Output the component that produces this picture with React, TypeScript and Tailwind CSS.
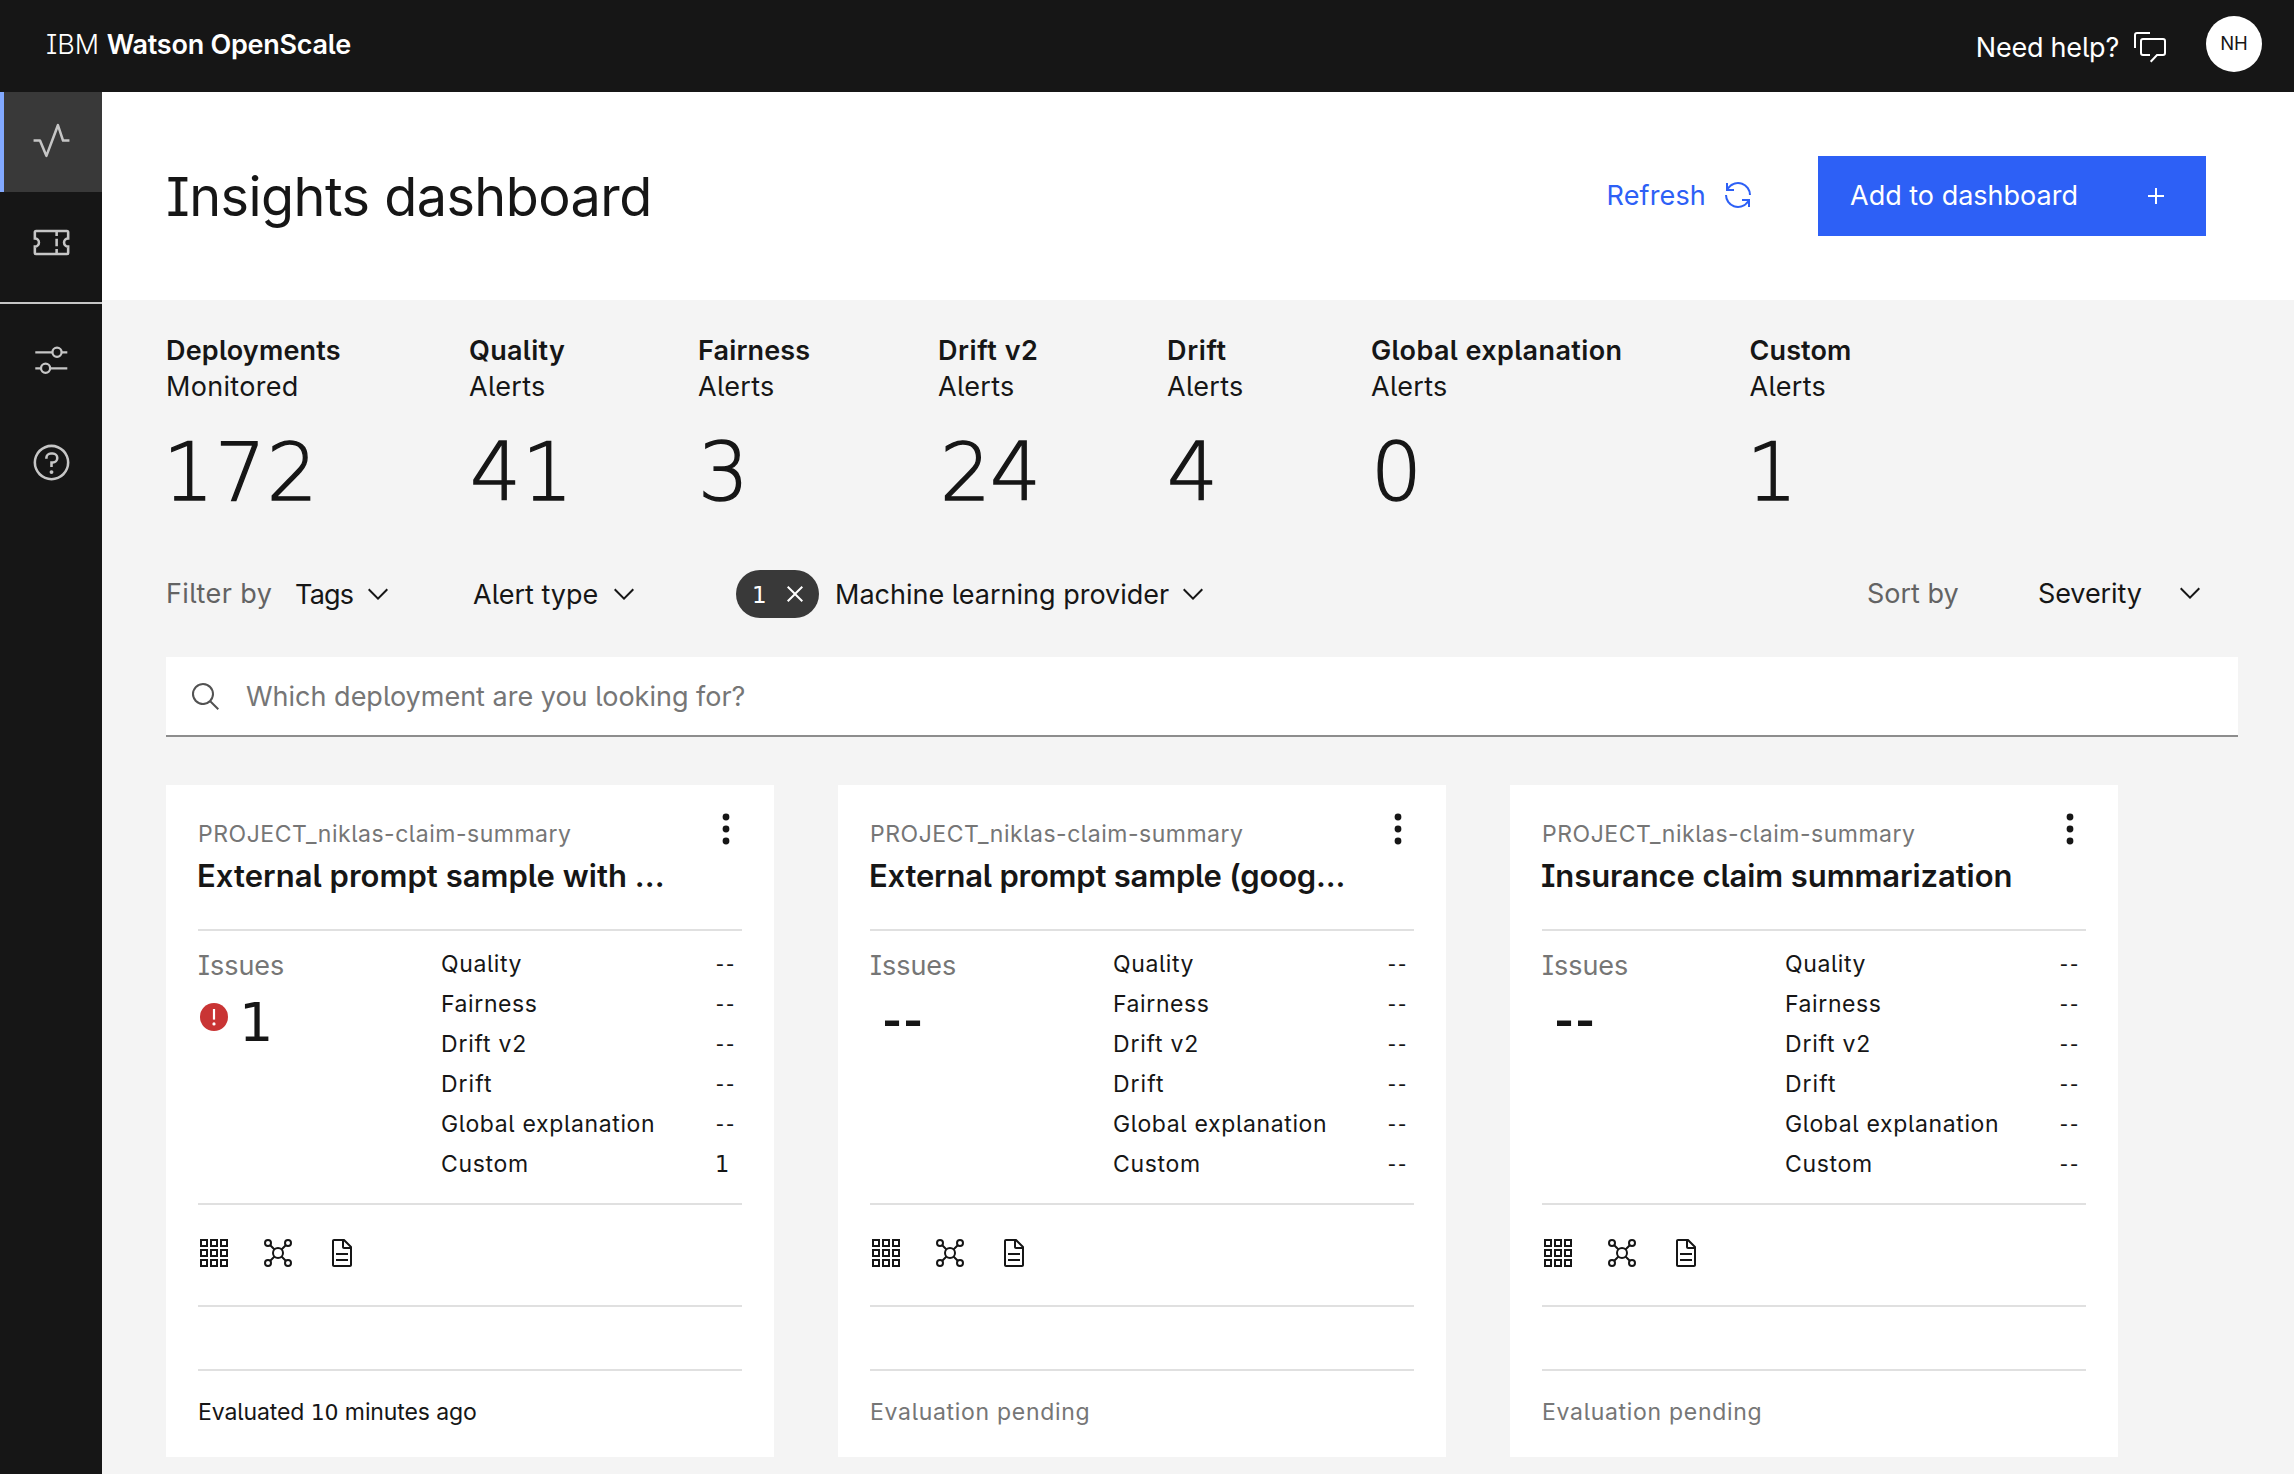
import React from "react";

type IconProps = { className?: string };
const box = "0 0 32 32";

const ChevronDown = ({ className = "" }: IconProps) => (
  <svg viewBox={box} fill="currentColor" className={`size-8 shrink-0 ${className}`}><path d="M16 22 6 12l1.4-1.4 8.6 8.6 8.6-8.6L26 12z" /></svg>
);
const Activity = () => (
  <svg viewBox={box} fill="currentColor" className="size-[41px]"><path d="M12,29a1,1,0,0,1-.92-.62L6.33,17H2V15H7a1,1,0,0,1,.92.62L12,25.28,20.06,3.65A1,1,0,0,1,21,3a1,1,0,0,1,.93.68L25.72,15H30v2H25a1,1,0,0,1-.95-.68L21,7,12.94,28.35A1,1,0,0,1,12,29Z" /></svg>
);
const Ticket = () => (
  <svg viewBox={box} fill="none" stroke="currentColor" strokeWidth="2" className="size-[41px]">
    <path d="M4 7h24a1 1 0 0 1 1 1v4.8a3.2 3.2 0 0 0 0 6.4V24a1 1 0 0 1-1 1H4a1 1 0 0 1-1-1v-4.8a3.2 3.2 0 0 0 0-6.4V8a1 1 0 0 1 1-1Z" />
    <path d="M20 7v4M20 13v6M20 21v4" />
  </svg>
);
const Sliders = () => (
  <svg viewBox={box} fill="none" stroke="currentColor" strokeWidth="2" className="size-[36.6px]">
    <path d="M2 9h15M25 9h5M2 23h5M15 23h15" />
    <circle cx="21" cy="9" r="4" /><circle cx="11" cy="23" r="4" />
  </svg>
);
const Help = () => (
  <svg viewBox={box} fill="currentColor" className="size-[41px]">
    <path d="M16,2A14,14,0,1,0,30,16,14,14,0,0,0,16,2Zm0,26A12,12,0,1,1,28,16,12,12,0,0,1,16,28Z" />
    <circle cx="16" cy="23.5" r="1.5" />
    <path d="M17,8H15.5A4.49,4.49,0,0,0,11,12.49V13h2v-.5A2.5,2.5,0,0,1,15.5,10H17a2.5,2.5,0,0,1,0,5H15v4.5h2V17a4.5,4.5,0,0,0,0-9Z" />
  </svg>
);
const Chat = () => (
  <svg viewBox={box} fill="none" stroke="currentColor" strokeWidth="2" className="size-8">
    <path d="M1 17V4a2 2 0 0 1 2-2h13" />
    <path d="M16 24H9a2 2 0 0 1-2-2V10a2 2 0 0 1 2-2h20a2 2 0 0 1 2 2v12a2 2 0 0 1-2 2h-6l-6.3 6.8" />
  </svg>
);
const Renew = () => (
  <svg viewBox={box} fill="currentColor" className="mb-[3px] size-8"><path d="M12,10H6.78A11,11,0,0,1,27,16h2A13,13,0,0,0,6,7.68V4H4v8h8Z" /><path d="M20,22h5.22A11,11,0,0,1,5,16H3a13,13,0,0,0,23,8.32V28h2V20H20Z" /></svg>
);
const Plus = () => (
  <svg viewBox={box} fill="currentColor" className="size-8"><path d="M17 15V8h-2v7H8v2h7v7h2v-7h7v-2z" /></svg>
);
const Close = () => (
  <svg viewBox={box} fill="currentColor" className="size-8"><path d="M17.4 16 24 9.4 22.6 8 16 14.6 9.4 8 8 9.4l6.6 6.6L8 22.6 9.4 24l6.6-6.6 6.6 6.6 1.4-1.4z" /></svg>
);
const Search = () => (
  <svg viewBox={box} fill="currentColor" className="mt-0.5 size-8"><path d="M29,27.5859l-7.5521-7.5521a11.0177,11.0177,0,1,0-1.4141,1.4141L27.5859,29ZM4,13a9,9,0,1,1,9,9A9.01,9.01,0,0,1,4,13Z" /></svg>
);
const Kebab = () => (
  <svg viewBox={box} fill="currentColor" className="size-8"><circle cx="16" cy="4" r="3.4" /><circle cx="16" cy="16" r="3.4" /><circle cx="16" cy="28" r="3.4" /></svg>
);
const ErrorFilled = () => (
  <svg viewBox={box} className="mt-2 size-8 shrink-0"><circle cx="16" cy="16" r="14" fill="#c93434" /><path d="M14.9 8h2.2v10.6h-2.2z" fill="#fff" /><circle cx="16" cy="22.9" r="1.6" fill="#fff" /></svg>
);
const GridIcon = () => (
  <svg viewBox={box} fill="none" stroke="currentColor" strokeWidth="2" className="size-8">
    {[3, 13, 23].map((y) => [3, 13, 23].map((x) => <rect key={`${x}-${y}`} x={x} y={y} width="6" height="6" />))}
  </svg>
);
const Network = () => (
  <svg viewBox={box} fill="none" stroke="currentColor" strokeWidth="2" className="size-8">
    <circle cx="16" cy="16" r="5" />
    {[6, 26].map((y) => [6, 26].map((x) => <circle key={`${x}-${y}`} cx={x} cy={y} r="3" />))}
    <path d="m8 8 4.5 4.5M24 8l-4.5 4.5M8 24l4.5-4.5M24 24l-4.5-4.5" />
  </svg>
);
const Document = () => (
  <svg viewBox={box} fill="currentColor" className="size-8"><path d="M25.7,9.3l-7-7C18.5,2.1,18.3,2,18,2H8C6.9,2,6,2.9,6,4v24c0,1.1,.9,2,2,2h16c1.1,0,2-.9,2-2V10C26,9.7,25.9,9.5,25.7,9.3z M18,4.4l5.6,5.6H18V4.4z M24,28H8V4h8v6c0,1.1,.9,2,2,2h6V28z" /><path d="M10 22h12v2H10zM10 16h12v2H10z" /></svg>
);

const stats = [
  { name: "Deployments", sub: "Monitored", value: "172", width: "w-[303px]", label: "tracking-[0.2px]", number: "-ml-[3px] tracking-[1px]" },
  { name: "Quality", sub: "Alerts", value: "41", width: "w-[229px]", label: "tracking-[0.32px]", number: "ml-px tracking-[1px]" },
  { name: "Fairness", sub: "Alerts", value: "3", width: "w-[240px]", label: "tracking-[0.15px]", number: "" },
  { name: "Drift v2", sub: "Alerts", value: "24", width: "w-[229px]", label: "tracking-[0.55px]", number: "ml-0.5 tracking-[-1px]" },
  { name: "Drift", sub: "Alerts", value: "4", width: "w-[204px]", label: "tracking-[0.64px]", number: "" },
  { name: "Global explanation", sub: "Alerts", value: "0", width: "w-[378.5px]", label: "tracking-[0.39px]", number: "" },
  { name: "Custom", sub: "Alerts", value: "1", width: "w-[200px]", label: "tracking-[0.1px]", number: "-ml-[3px]" },
];

const metrics = [
  { name: "Quality", tracking: "tracking-[0.6px]" },
  { name: "Fairness", tracking: "tracking-[0.59px]" },
  { name: "Drift v2", tracking: "tracking-[0.78px]" },
  { name: "Drift", tracking: "tracking-[1px]" },
  { name: "Global explanation", tracking: "tracking-[0.64px]" },
  { name: "Custom", tracking: "tracking-[0.67px]" },
];

const cards = [
  { title: "External prompt sample with ...", tracking: "tracking-[0.03px]", issues: 1, evaluated: true },
  { title: "External prompt sample (goog...", tracking: "tracking-[-0.21px]", issues: 0, evaluated: false },
  { title: "Insurance claim summarization", tracking: "tracking-[-0.09px]", issues: 0, evaluated: false },
];

function Card({ title, tracking, issues, evaluated }: (typeof cards)[number]) {
  return (
    <article className="h-[672px] w-[608px] bg-white px-8 pt-8">
      <header className="flex h-28 justify-between">
        <div className="pt-px whitespace-nowrap">
          <p className="text-[23px] leading-8 tracking-[0.52px] text-[#767676]">PROJECT_niklas-claim-summary</p>
          <h2 className={`mt-1.5 -ml-px text-[31px] leading-10 font-semibold ${tracking}`}>{title}</h2>
        </div>
        <div className="-mt-1"><Kebab /></div>
      </header>
      <section className="flex h-[276px] border-y-2 border-[#e0e0e0]">
        <div className="w-[243px] pt-[17px]">
          <p className="text-[27px] leading-9 text-[#767676]">Issues</p>
          {issues ? (
            <div className="mt-[9px] flex">
              <ErrorFilled />
              <span className="ml-[9px] font-['DejaVu_Sans'] text-[54px] leading-[60px]">{issues}</span>
            </div>
          ) : (
            <p className="mt-2 ml-[13px] font-['Open_Sans'] text-[56px] leading-[48px] font-semibold tracking-[3px] whitespace-nowrap">--</p>
          )}
        </div>
        <dl className="flex-1 pt-[13px]">
          {metrics.map((m) => (
            <div key={m.name} className="flex h-10 text-[23px] leading-10">
              <dt className={`flex-1 ${m.tracking}`}>{m.name}</dt>
              {m.name === "Custom" && issues ? (
                <dd className="w-[27px] font-['DejaVu_Sans'] text-[22.5px]">{issues}</dd>
              ) : (
                <dd className="w-[26px] font-['Open_Sans'] text-[24px] leading-[37px] tracking-[2.5px]">--</dd>
              )}
            </div>
          ))}
        </dl>
      </section>
      <div className="flex h-[102px] gap-8 border-b-2 border-[#e0e0e0] pt-8"><GridIcon /><Network /><Document /></div>
      <div className="h-16 border-b-2 border-[#e0e0e0]" />
      {evaluated ? (
        <p className="mt-[25px] text-[23px] leading-8 tracking-[-0.1px]">Evaluated <span className="font-['DejaVu_Sans'] text-[22px]">10</span> minutes ago</p>
      ) : (
        <p className="mt-[25px] text-[23px] leading-8 tracking-[0.7px] text-[#767676]">Evaluation pending</p>
      )}
    </article>
  );
}

export default function App() {
  return (
    <div className="flex h-[1474px] w-[2294px] flex-col overflow-hidden bg-[#f4f4f4] font-['Inter',sans-serif] text-[27px] text-[#161616] [font-feature-settings:'cv05','cv08']">
      <header className="flex h-[92px] items-center justify-between bg-[#161616] pb-1 pr-8 pl-[46px] text-white">
        <p className="pt-0.5 leading-9"><span className="font-light">IBM</span> <b className="font-semibold tracking-[-0.25px]">Watson OpenScale</b></p>
        <div className="flex items-center">
          <span className="mt-[7px] mr-[15px] leading-9 tracking-[-0.22px]">Need help?</span>
          <div className="mt-1.5"><Chat /></div>
          <span className="ml-10 flex size-14 items-center justify-center rounded-full bg-white text-[18.5px] text-[#161616]">NH</span>
        </div>
      </header>
      <div className="flex min-h-0 flex-1">
        <nav className="w-[102px] bg-[#161616] text-[#c6c6c6]">
          <a className="flex h-[100px] items-center justify-center border-l-4 border-[#82a9ff] bg-[#393939] pr-[3px] pb-1"><Activity /></a>
          <a className="flex h-[100px] items-center justify-center pl-px"><Ticket /></a>
          <div className="mt-2.5 mb-1.5 h-0.5 bg-[#c6c6c6]" />
          <a className="flex h-[100px] items-center justify-center pl-px"><Sliders /></a>
          <a className="mt-0.5 flex h-[100px] items-center justify-center pl-px"><Help /></a>
        </nav>
        <div className="flex-1">
          <div className="flex h-52 items-center bg-white pr-[88px] pl-16">
            <h1 className="mr-auto pt-0.5 text-[54px] leading-[64px] tracking-[-0.56px]">Insights dashboard</h1>
            <button className="flex items-center gap-4 tracking-[0.15px] text-[#2d60f6]">Refresh<Renew /></button>
            <button className="ml-16 flex h-20 w-[388px] items-center justify-between bg-[#2d60f6] pr-[34px] pl-8 text-white"><span className="pt-px">Add to dashboard</span><Plus /></button>
          </div>
          <main className="pt-[33px] pl-16">
            <section className="flex whitespace-nowrap">
              {stats.map((s) => (
                <div key={s.name} className={s.width}>
                  <p className={`leading-9 font-semibold ${s.label}`}>{s.name}</p>
                  <p className="leading-9 tracking-[0.3px]">{s.sub}</p>
                  <p className={`mt-[18px] font-['DejaVu_Sans'] text-[80px] leading-[100px] font-extralight [-webkit-text-stroke:1.4px_#161616] ${s.number}`}>{s.value}</p>
                </div>
              ))}
            </section>
            <section className="mt-[47px] flex h-12 items-center pr-[88px] leading-[48px] whitespace-nowrap">
              <span className="w-[129px] tracking-[0.42px] text-[#636363]">Filter by</span>
              <span className="w-[67px] pt-px tracking-[-0.8px]">Tags</span><ChevronDown />
              <span className="ml-[79px] w-[135px] pt-px">Alert type</span><ChevronDown />
              <span className="ml-24 flex h-12 w-[83px] items-center justify-between rounded-full bg-[#393939] pr-2 pl-4 text-white"><span className="pt-px font-['DejaVu_Sans'] text-[23px]">1</span><Close /></span>
              <span className="ml-4 w-[342px] pt-px">Machine learning provider</span><ChevronDown />
              <span className="ml-auto w-[171px] text-[#636363]">Sort by</span>
              <span className="w-[136px] tracking-[-0.1px]">Severity</span><ChevronDown className="-mt-0.5" />
            </section>
            <div className="mt-[39px] flex h-20 w-[2072px] items-center gap-6 border-b-2 border-[#8d8d8d] bg-white pl-6 text-[#525252]">
              <Search /><span className="pt-0.5 text-[#767676]">Which deployment are you looking for?</span>
            </div>
            <section className="mt-12 flex gap-16">{cards.map((c) => <Card key={c.title} {...c} />)}</section>
          </main>
        </div>
      </div>
    </div>
  );
}
